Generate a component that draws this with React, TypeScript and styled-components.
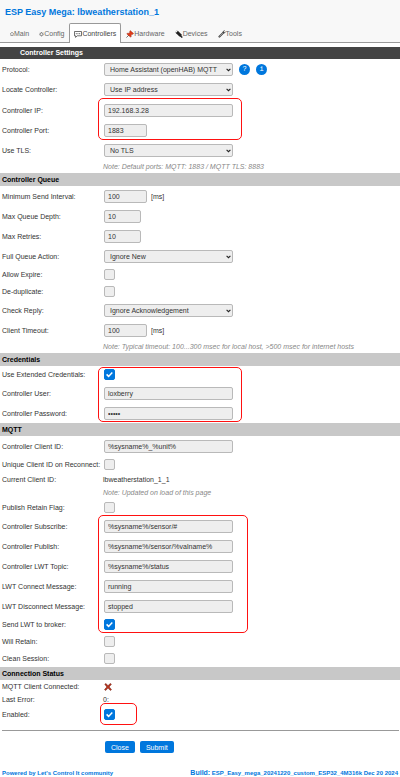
import React, { useId, type ReactNode } from "react";
import styled, { createGlobalStyle, css } from "styled-components";

const blue = "#0077dd";

const GlobalStyle = createGlobalStyle`
  *, *::before, *::after { box-sizing: border-box; }
  body {
    margin: 0;
    background: #fff;
    color: #333;
    font-family: "Liberation Sans", Arial, sans-serif;
    font-size: 7px;
    line-height: 9px;
  }
  input, select, button { font: inherit; color: inherit; margin: 0; }
`;

const Header = styled.header`
  background: #f8f8f8;
  border-bottom: 1px solid #999;
  padding-top: 6px;
`;

const Title = styled.h1`
  margin: 0;
  padding-left: 5px;
  color: ${blue};
  font-size: 9px;
  line-height: 12px;
`;

const Tabs = styled.nav`
  display: flex;
  margin: 5px 0 -1px;
  padding-left: 5px;
`;

const Tab = styled.a<{ $active?: boolean }>`
  display: flex;
  align-items: center;
  height: 20px;
  padding: 0 4px;
  border: 1px solid transparent;
  border-bottom: 0;
  border-radius: 2px 2px 0 0;
  color: #666;
  text-decoration: none;
  ${(p) =>
    p.$active &&
    css`
      background: #fff;
      border-color: #999;
      color: #444;
    `}
`;

const Form = styled.form`
  padding-top: 4px;
`;

const PageHeading = styled.h2`
  margin: 0;
  padding: 2px 20px;
  background: #444;
  color: #fff;
  font-size: 7px;
  line-height: 8px;
`;

const SectionHeading = styled.h3`
  margin: 0;
  padding: 2px;
  background: #c8c8c8;
  color: #000;
  font-size: 7px;
  line-height: 9px;
`;

type RowKind = "field" | "tall" | "check" | "text";
const rowHeights: Record<RowKind, number> = { field: 20, tall: 21, check: 17, text: 13 };

const RowBox = styled.div<{ $kind: RowKind }>`
  display: grid;
  grid-template-columns: 102px 1fr;
  align-items: center;
  min-height: ${(p) => rowHeights[p.$kind]}px;
  padding-left: 2px;
  white-space: nowrap;
`;

const Cell = styled.div`
  display: flex;
  align-items: center;
  gap: 4px;
`;

const control = css`
  height: 13px;
  border: 1px solid #b9b9b9;
  border-radius: 2px;
  background: #eee;
  outline: 0;
`;

const TextInput = styled.input<{ $width: "full" | "medium" | "small" }>`
  ${control}
  width: ${(p) => ({ full: 129, medium: 43, small: 37 })[p.$width]}px;
  padding: 0 3px;
  line-height: 13px;
`;

const SelectBox = styled.span`
  position: relative;
  display: flex;
  width: 129px;
  svg {
    position: absolute;
    right: 2px;
    top: 5px;
    pointer-events: none;
  }
`;

const Select = styled.select`
  ${control}
  width: 100%;
  padding: 0 10px 0 5px;
  appearance: none;
`;

const CheckBox = styled.span`
  position: relative;
  display: flex;
  svg {
    position: absolute;
    inset: 0;
    pointer-events: none;
  }
`;

const CheckInput = styled.input`
  appearance: none;
  width: 11px;
  height: 11px;
  border: 1px solid #b9b9b9;
  border-radius: 2px;
  background: #eee;
  &:checked {
    background: ${blue};
    border-color: ${blue};
  }
  &:not(:checked) + svg {
    display: none;
  }
`;

const Plain = styled.output`
  margin-left: -1px;
`;

const Note = styled.p`
  display: flex;
  align-items: center;
  min-height: 13px;
  margin: 0;
  padding-left: 103px;
  color: #888;
  font-style: italic;
  white-space: nowrap;
`;

const RoundLink = styled.a`
  display: grid;
  place-items: center;
  width: 11px;
  height: 11px;
  margin-left: 2px;
  border-radius: 50%;
  background: ${blue};
  color: #fff;
  font-family: "Liberation Mono", monospace;
  text-decoration: none;
`;

const Group = styled.div`
  position: relative;
`;

const Marker = styled.span<{ $inset: string; $width: number }>`
  position: absolute;
  inset: ${(p) => p.$inset};
  width: ${(p) => p.$width}px;
  border: 1px solid #f11;
  border-radius: 5px;
  pointer-events: none;
`;

const Actions = styled.div`
  display: flex;
  gap: 5px;
  margin: 7px 1px 0 2px;
  padding: 10px 0 0 103px;
  border-top: 1px solid #999;
`;

const Button = styled.button`
  height: 12px;
  padding: 0 6px;
  border: 0;
  border-radius: 2px;
  background: ${blue};
  color: #fff;
`;

const Footer = styled.footer`
  display: flex;
  justify-content: space-between;
  align-items: baseline;
  padding: 15px 2px 0;
  color: ${blue};
  font-size: 6px;
  font-weight: bold;
  white-space: nowrap;
  a { color: inherit; text-decoration: none; }
`;

const Larger = styled.span`
  font-size: 7px;
`;

const Arrow = () => (
  <svg width="5" height="4" viewBox="0 0 5 4" aria-hidden="true">
    <path d="M.6 .8 2.5 2.7 4.4 .8" fill="none" stroke="#222" strokeWidth="1.1" />
  </svg>
);

const Tick = () => (
  <svg width="11" height="11" viewBox="0 0 11 11" aria-hidden="true">
    <path d="M2.6 5.4 4.6 7.4 8.3 3.6" fill="none" stroke="#fff" strokeWidth="1.5" />
  </svg>
);

const HomeIcon = () => (
  <svg width="4" height="5" viewBox="0 0 4 5" aria-hidden="true">
    <path d="M.2 2.8 2 1.2 3.8 2.8M.8 2.6V4.5H3.2V2.6" fill="none" stroke="#666" strokeWidth=".6" />
  </svg>
);

const GearIcon = () => (
  <svg width="5" height="6" viewBox="0 0 5 6" aria-hidden="true">
    <circle cx="2.5" cy="3.2" r="1.4" fill="none" stroke="#666" strokeWidth=".7" />
    <path d="M2.5 1V2M2.5 4.6V5.5M.2 3.2H1M4 3.2H4.8M.9 1.6 1.5 2.2M4.1 1.6 3.5 2.2M.9 4.8 1.5 4.2M4.1 4.8 3.5 4.2" stroke="#666" strokeWidth=".6" />
  </svg>
);

const SpeechIcon = () => (
  <svg width="8" height="8" viewBox="0 0 8 8" aria-hidden="true">
    <path d="M.5 1.5H7.5V5.8H3.2L1.6 7.4V5.8H.5Z" fill="#fff" stroke="#333" strokeWidth=".7" />
    <path d="M1.8 3.7H6.4" stroke="#333" strokeWidth=".9" strokeDasharray=".9 .8" />
  </svg>
);

const PinIcon = () => (
  <svg width="8" height="8" viewBox="0 0 8 8" aria-hidden="true">
    <path d="M.4 7.6 3 5" stroke="#555" strokeWidth=".8" />
    <path d="M4.2 .6 7.6 3.4 6.9 4.3 6 4.3 5.2 5.3 5.2 6.8 4.4 7.1 .8 4 1.3 3.2 2.9 3.2 3.9 2.3 3.7 1.3Z" fill="#e03a18" stroke="#8a2b1c" strokeWidth=".4" />
  </svg>
);

const PlugIcon = () => (
  <svg width="8" height="8" viewBox="0 0 8 8" aria-hidden="true">
    <path d="M.5 2.2 1.6 3.2M2 .6 3 1.8" stroke="#222" strokeWidth=".7" />
    <path d="M.8 3 3 1.1 6.4 4.3 6.6 6.4 4.4 6.5Z" fill="#222" />
    <path d="M5.3 5.8 7.3 7.6" stroke="#222" strokeWidth="1.3" />
  </svg>
);

const WrenchIcon = () => (
  <svg width="8" height="8" viewBox="0 0 8 8" aria-hidden="true">
    <path d="M1.4 6.6 5.4 2.6" stroke="#444" strokeWidth="2" strokeLinecap="round" />
    <path d="M1.5 6.5 5 3" stroke="#ccc" strokeWidth=".6" />
    <path d="M6.7 .6 5.3 1.3 5.2 2.8 6.6 2.9 7.5 1.8" fill="none" stroke="#444" strokeWidth=".9" />
  </svg>
);

const CrossIcon = () => (
  <svg width="8" height="8" viewBox="0 0 8 8" role="img" aria-label="Not connected">
    <path d="M.8 1.2 2 .5 4 2.8 6.2 .4 7.4 1.2 5.2 3.9 7.5 6.6 6.4 7.5 4 5.1 1.7 7.5 .5 6.6 2.8 4Z" fill="#b8321c" stroke="#6e2115" strokeWidth=".5" />
  </svg>
);

function TextRow({ label, value, width = "full", unit, type = "text" }: {
  label: string;
  value: string;
  width?: "full" | "medium" | "small";
  unit?: string;
  type?: string;
}) {
  const id = useId();
  return (
    <RowBox $kind="field">
      <label htmlFor={id}>{label}:</label>
      <Cell>
        <TextInput id={id} type={type} defaultValue={value} $width={width} />
        {unit && <span>{unit}</span>}
      </Cell>
    </RowBox>
  );
}

function SelectRow({ label, value, kind = "field", children }: {
  label: string;
  value: string;
  kind?: RowKind;
  children?: ReactNode;
}) {
  const id = useId();
  return (
    <RowBox $kind={kind}>
      <label htmlFor={id}>{label}:</label>
      <Cell>
        <SelectBox>
          <Select id={id} defaultValue={value}>
            <option>{value}</option>
          </Select>
          <Arrow />
        </SelectBox>
        {children}
      </Cell>
    </RowBox>
  );
}

function CheckRow({ label, checked = false }: { label: string; checked?: boolean }) {
  const id = useId();
  return (
    <RowBox $kind="check">
      <label htmlFor={id}>{label}:</label>
      <Cell>
        <CheckBox>
          <CheckInput id={id} type="checkbox" defaultChecked={checked} />
          <Tick />
        </CheckBox>
      </Cell>
    </RowBox>
  );
}

function PlainRow({ label, children }: { label: string; children: ReactNode }) {
  return (
    <RowBox $kind="text">
      <span>{label}:</span>
      <Cell>{children}</Cell>
    </RowBox>
  );
}

const tabs = [
  { name: "Main", icon: <HomeIcon /> },
  { name: "Config", icon: <GearIcon /> },
  { name: "Controllers", icon: <SpeechIcon />, active: true },
  { name: "Hardware", icon: <PinIcon /> },
  { name: "Devices", icon: <PlugIcon /> },
  { name: "Tools", icon: <WrenchIcon /> },
];

export default function App() {
  return (
    <>
      <GlobalStyle />
      <Header>
        <Title>ESP Easy Mega: lbweatherstation_1</Title>
        <Tabs>
          {tabs.map((tab) => (
            <Tab key={tab.name} href="#" $active={tab.active}>
              {tab.icon}
              {tab.name}
            </Tab>
          ))}
        </Tabs>
      </Header>
      <Form onSubmit={(e) => e.preventDefault()}>
        <PageHeading>Controller Settings</PageHeading>
        <SelectRow label="Protocol" value="Home Assistant (openHAB) MQTT">
          <RoundLink href="#">?</RoundLink>
          <RoundLink href="#">i</RoundLink>
        </SelectRow>
        <SelectRow label="Locate Controller" value="Use IP address" kind="tall" />
        <Group>
          <TextRow label="Controller IP" value="192.168.3.28" />
          <TextRow label="Controller Port" value="1883" width="medium" />
          <Marker $inset="-2px auto 0 98px" $width={144} />
        </Group>
        <SelectRow label="Use TLS" value="No TLS" />
        <Note>Note: Default ports: MQTT: 1883 / MQTT TLS: 8883</Note>

        <SectionHeading>Controller Queue</SectionHeading>
        <TextRow label="Minimum Send Interval" value="100" width="medium" unit="[ms]" />
        <TextRow label="Max Queue Depth" value="10" width="small" />
        <TextRow label="Max Retries" value="10" width="small" />
        <SelectRow label="Full Queue Action" value="Ignore New" />
        <CheckRow label="Allow Expire" />
        <CheckRow label="De-duplicate" />
        <SelectRow label="Check Reply" value="Ignore Acknowledgement" />
        <TextRow label="Client Timeout" value="100" width="medium" unit="[ms]" />
        <Note>Note: Typical timeout: 100...300 msec for local host, &gt;500 msec for internet hosts</Note>

        <SectionHeading>Credentials</SectionHeading>
        <Group>
          <CheckRow label="Use Extended Credentials" checked />
          <TextRow label="Controller User" value="loxberry" />
          <TextRow label="Controller Password" value="admin" type="password" />
          <Marker $inset="1px auto 1px 98px" $width={144} />
        </Group>

        <SectionHeading>MQTT</SectionHeading>
        <TextRow label="Controller Client ID" value="%sysname%_%unit%" />
        <CheckRow label="Unique Client ID on Reconnect" />
        <PlainRow label="Current Client ID">
          <Plain>lbweatherstation_1_1</Plain>
        </PlainRow>
        <Note>Note: Updated on load of this page</Note>
        <CheckRow label="Publish Retain Flag" />
        <Group>
          <TextRow label="Controller Subscribe" value="%sysname%/sensor/#" />
          <TextRow label="Controller Publish" value="%sysname%/sensor/%valname%" />
          <TextRow label="Controller LWT Topic" value="%sysname%/status" />
          <TextRow label="LWT Connect Message" value="running" />
          <TextRow label="LWT Disconnect Message" value="stopped" />
          <CheckRow label="Send LWT to broker" checked />
          <Marker $inset="-1px auto 0 98px" $width={150} />
        </Group>
        <CheckRow label="Will Retain" />
        <CheckRow label="Clean Session" />

        <SectionHeading>Connection Status</SectionHeading>
        <PlainRow label="MQTT Client Connected">
          <CrossIcon />
        </PlainRow>
        <PlainRow label="Last Error">
          <Plain>0:</Plain>
        </PlainRow>
        <Group>
          <CheckRow label="Enabled" checked />
          <Marker $inset="-3px auto -2px 100px" $width={37} />
        </Group>

        <Actions>
          <Button type="button">Close</Button>
          <Button type="submit">Submit</Button>
        </Actions>
      </Form>
      <Footer>
        <a href="#">Powered by Let's Control It community</a>
        <span>
          <Larger>Build:</Larger> ESP_Easy_mega_20241220_custom_ESP32_4M316k Dec 20 2024
        </span>
      </Footer>
    </>
  );
}
